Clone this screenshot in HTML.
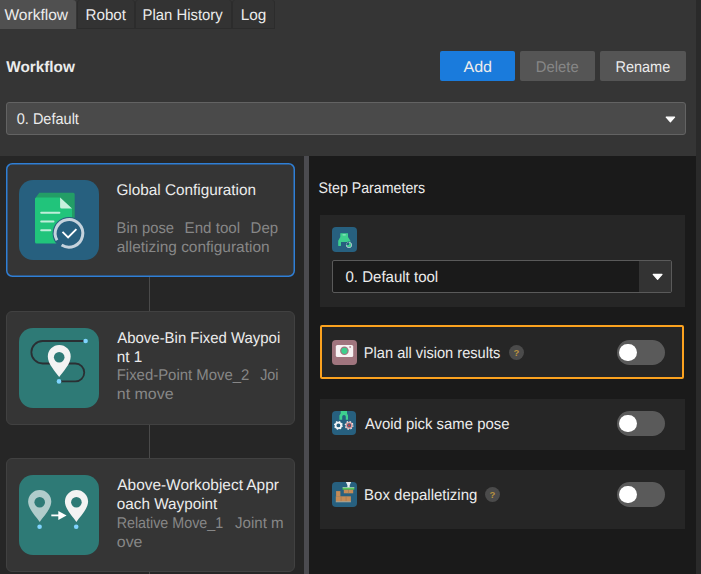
<!DOCTYPE html>
<html>
<head>
<meta charset="utf-8">
<title>Workflow</title>
<style>
html,body{margin:0;padding:0;}
body{width:701px;height:574px;overflow:hidden;background:#353535;position:relative;
 font-family:"Liberation Sans","DejaVu Sans",sans-serif;color:#ececec;font-size:15.5px;}
.abs{position:absolute;}
.t{position:absolute;white-space:pre;line-height:20px;height:20px;font-size:15.5px;transform-origin:0 0;text-rendering:geometricPrecision;}
.t.b{font-weight:bold;}
.t.g{color:#878787;}
/* tabs */
.tab{position:absolute;top:0;height:29px;box-sizing:border-box;background:#333333;
 border:1px solid #2c2c2c;border-top:none;border-radius:3px 3px 0 0;}
.tab.sel{background:#505050;border:none;border-radius:0 3px 0 0;}
/* buttons */
.btn{position:absolute;top:51px;height:30px;border-radius:2px;}
/* panels */
.box{position:absolute;left:320px;width:365px;background:#262626;}
.card{position:absolute;left:6px;width:289px;height:114px;box-sizing:border-box;background:#353535;
 border:1px solid #414141;border-radius:6px;}
.tile{position:absolute;left:19px;width:80px;height:80px;border-radius:14px;background:#2e7a76;}
.ico{position:absolute;left:332px;width:25px;height:25px;border-radius:4px;background:#27607f;overflow:hidden;}
.tog{position:absolute;left:617px;width:48px;height:25px;border-radius:13px;background:#5a5a5a;}
.tog i{position:absolute;left:2.3px;top:3.8px;width:17.5px;height:17.5px;border-radius:50%;background:#fff;}
.help{position:absolute;width:15px;height:15px;border-radius:50%;background:#4b4b4b;color:#b8923f;
 font-size:9.5px;font-weight:bold;line-height:15px;text-align:center;}
.g{color:#8a8a8a;}
</style>
</head>
<body>
<!-- right strip -->
<div class="abs" style="left:696px;top:0;width:5px;height:574px;background:#2a2a2a;"></div>

<!-- tabs -->
<div class="tab sel" style="left:0;width:76px;"></div>
<div class="tab" style="left:77px;width:58px;"></div>
<div class="tab" style="left:135px;width:97px;"></div>
<div class="tab" style="left:232px;width:43px;"></div>
<!--TEXTS:tabs-->
<span class="t" id="tb1" style="left:4px;top:6px;transform:translateX(0.50px) scaleX(1.0016);">Workflow</span>
<span class="t" id="tb2" style="left:85px;top:6px;transform:translateX(0.48px) scaleX(0.9800);">Robot</span>
<span class="t" id="tb3" style="left:142px;top:6px;transform:translateX(0.60px) scaleX(0.9581);">Plan History</span>
<span class="t" id="tb4" style="left:240px;top:6px;transform:translateX(0.66px) scaleX(0.9895);">Log</span>
<!--/TEXTS:tabs-->

<!-- header -->
<div class="btn" style="left:440px;width:75px;background:#1a7bdc;"></div>
<div class="btn" style="left:520px;width:75px;background:#555555;"></div>
<div class="btn" style="left:600px;width:86px;background:#555555;"></div>
<!--TEXTS:header-->
<span class="t b" id="hd" style="left:6px;top:58px;transform:translateX(0.30px) scaleX(0.9871);">Workflow</span>
<span class="t" id="b1" style="left:463px;top:58px;transform:translateX(0.40px) scaleX(1.0377);">Add</span>
<span class="t g" id="b2" style="left:535px;top:58px;transform:translateX(0.81px) scaleX(0.9558);">Delete</span>
<span class="t" id="b3" style="left:615px;top:58px;transform:translateX(0.43px) scaleX(0.9357);">Rename</span>
<!--/TEXTS:header-->

<!-- dropdown -->
<div class="abs" style="left:6px;top:102px;width:680px;height:33px;box-sizing:border-box;background:#4a4a4a;border:1px solid #636363;border-radius:3px;"></div>
<svg class="abs" style="left:664px;top:115px;" width="14" height="10" viewBox="0 0 14 10"><path d="M2.2 2.2 L10.6 2.2 L6.4 6.8 Z" fill="#fff" stroke="#fff" stroke-width="1.2" stroke-linejoin="round"/></svg>
<!--TEXTS:dropdown-->
<span class="t" id="dd" style="left:16px;top:110px;transform:translateX(0.73px) scaleX(0.9369);">0. Default</span>
<!--/TEXTS:dropdown-->

<!-- lower area -->
<div class="abs" style="left:0;top:156px;width:304px;height:418px;background:#262626;"></div>
<div class="abs" style="left:304px;top:156px;width:5px;height:418px;background:#4b4b50;"></div>
<div class="abs" style="left:309px;top:156px;width:387px;height:418px;background:#1a1a1a;"></div>

<!-- connectors -->
<div class="abs" style="left:149px;top:277px;width:1px;height:297px;background:#4a4a4a;"></div>

<!-- card 1 -->
<svg class="abs" style="left:6px;top:163px;" width="289" height="114" viewBox="0 0 289 114"><rect x="0.75" y="0.75" width="287.5" height="112.5" rx="5.5" fill="#353535" stroke="#2f7fd6" stroke-width="1.5"/></svg>
<div class="tile" style="top:180px;background:#27607f;"></div>
<svg class="abs" style="left:19px;top:180px;" width="80" height="80" viewBox="0 0 80 80">
<path d="M20.3 12.8 H54.2 a1.5 1.5 0 0 1 1.5 1.5 V43 H16 V18.4 Z" fill="#239d66"/>
<path d="M17.5 17.4 H41.1 L53 28.6 V62 a1.5 1.5 0 0 1 -1.5 1.5 H17.5 a1.5 1.5 0 0 1 -1.5 -1.5 V18.9 a1.5 1.5 0 0 1 1.5 -1.5 Z" fill="#21c47b"/>
<path d="M41.1 17.4 L53 28.6 H42.6 a1.5 1.5 0 0 1 -1.5 -1.5 Z" fill="#c8f0dd"/>
<rect x="21.2" y="31.8" width="20.2" height="2" rx="1" fill="#bfeeda"/>
<rect x="21.2" y="40.4" width="14.3" height="2" rx="1" fill="#bfeeda"/>
<rect x="21.2" y="49.2" width="11.1" height="2" rx="1" fill="#bfeeda"/>
<circle cx="50" cy="53.3" r="16.4" fill="#27607f"/>
<path d="M38.0 60.2 A13.8 13.8 0 1 1 42.6 65" fill="none" stroke="#c5d3dd" stroke-width="3"/>
<path d="M43.5 51.8 L49.1 57.4 L57.4 49.1" fill="none" stroke="#ffffff" stroke-width="1.9"/>
</svg>

<!--TEXTS:card1-->
<span class="t" id="c1a" style="left:116px;top:181px;transform:translateX(0.46px) scaleX(0.9878);">Global Configuration</span>
<span class="t g" id="c1b1" style="left:116px;top:219px;transform:translateX(0.61px) scaleX(0.9504);">Bin pose</span>
<span class="t g" id="c1b2" style="left:184px;top:219px;transform:translateX(0.58px) scaleX(0.9753);">End tool</span>
<span class="t g" id="c1b3" style="left:250px;top:219px;transform:translateX(0.59px) scaleX(0.9660);">Dep</span>
<span class="t g" id="c1c" style="left:116px;top:238px;transform:translateX(0.75px) scaleX(0.9964);">alletizing configuration</span>
<!--/TEXTS:card1-->

<!-- card 2 -->
<div class="card" style="top:311px;"></div>
<div class="tile" style="top:328px;"></div>
<svg class="abs" style="left:19px;top:328px;" width="80" height="80" viewBox="0 0 80 80">
<path d="M66.6 13 H23.6 A11.25 11.25 0 0 0 23.6 35.5 H56.3 A8.95 8.95 0 0 1 56.3 53.4 H40" fill="none" stroke="#2a2f33" stroke-width="1.8"/>
<circle cx="66.6" cy="13" r="2.3" fill="#7fd4ff"/>
<circle cx="40" cy="53.4" r="2.3" fill="#7fd4ff"/>
<path d="M40.2 49 C36.5 43.5 28.8 36 28.8 28.4 A11.45 11.45 0 0 1 51.7 28.4 C51.7 36 43.9 43.5 40.2 49 Z" fill="#f3f3f3"/>
<circle cx="40.2" cy="29.3" r="5.3" fill="#2e7a76"/>
</svg>

<!--TEXTS:card2-->
<span class="t" id="c2a" style="left:117px;top:329px;transform:translateX(0.30px) scaleX(0.9634);">Above-Bin Fixed Waypoi</span>
<span class="t" id="c2b" style="left:116px;top:348px;transform:translateX(0.81px) scaleX(0.9856);">nt 1</span>
<span class="t g" id="c2c1" style="left:116px;top:366px;transform:translateX(0.70px) scaleX(0.9625);">Fixed-Point Move_2</span>
<span class="t g" id="c2c2" style="left:260px;top:366px;transform:translateX(0.17px) scaleX(0.9243);">Joi</span>
<span class="t g" id="c2d" style="left:116px;top:385px;transform:translateX(0.77px) scaleX(1.0299);">nt move</span>
<!--/TEXTS:card2-->

<!-- card 3 -->
<div class="card" style="top:458px;"></div>
<div class="tile" style="top:475px;"></div>
<svg class="abs" style="left:19px;top:475px;" width="80" height="80" viewBox="0 0 80 80">
<path d="M20.7 46.9 C17 41.5 9.1 34 9.1 26.6 A11.6 11.6 0 0 1 32.3 26.6 C32.3 34 24.4 41.5 20.7 46.9 Z" fill="#b0cccb"/>
<circle cx="20.7" cy="27.2" r="5.3" fill="#2e7a76"/>
<path d="M57.4 46.9 C53.7 41.5 45.9 34 45.9 26.6 A11.6 11.6 0 0 1 69.1 26.6 C69.1 34 61.1 41.5 57.4 46.9 Z" fill="#f3f3f3"/>
<circle cx="57.4" cy="27.2" r="5.3" fill="#2e7a76"/>
<circle cx="20.6" cy="51.8" r="2.3" fill="#7fd4ff"/>
<circle cx="57.2" cy="51.8" r="2.3" fill="#7fd4ff"/>
<rect x="32.3" y="39.5" width="8" height="1.8" fill="#fff"/>
<path d="M39.3 36 L47.6 40.4 L39.3 44.9 Z" fill="#fff"/>
</svg>

<!--TEXTS:card3-->
<span class="t" id="c3a" style="left:117px;top:476px;transform:translateX(0.30px) scaleX(0.9941);">Above-Workobject Appr</span>
<span class="t" id="c3b" style="left:116px;top:495px;transform:translateX(0.81px) scaleX(0.9857);">oach Waypoint</span>
<span class="t g" id="c3c1" style="left:116px;top:514px;transform:translateX(0.65px) scaleX(0.9225);">Relative Move_1</span>
<span class="t g" id="c3c2" style="left:234px;top:514px;transform:translateX(0.96px) scaleX(0.9744);">Joint m</span>
<span class="t g" id="c3d" style="left:116px;top:533px;transform:translateX(0.79px) scaleX(1.0274);">ove</span>
<!--/TEXTS:card3-->

<!-- right panel -->

<div class="box" style="top:215px;height:92px;"></div>
<svg class="abs" style="left:332px;top:227px;" width="25" height="25" viewBox="0 0 25 25">
<rect width="25" height="25" rx="4" fill="#27607f"/>
<path d="M8.3 6.2 H16 V10 L18.4 13.8 V19 H16.2 V15 H9 V18.4 a0.6 0.6 0 0 1 -0.6 0.6 H6.8 a0.6 0.6 0 0 1 -0.6 -0.6 V13.8 L8.3 10 Z" fill="#3ecf8e"/>
<rect x="10.4" y="7.2" width="3.5" height="1.2" rx="0.6" fill="#8ee6bd"/>
<circle cx="17" cy="18" r="3.6" fill="#27607f"/>
<circle cx="17" cy="18" r="2.7" fill="#3ecf8e" stroke="#a9bfcb" stroke-width="1"/>
<path d="M14.3 18 A2.7 2.7 0 0 1 17 15.3 V18 Z" fill="#27607f"/>
</svg>
<div class="abs" style="left:332px;top:260px;width:340px;height:33px;box-sizing:border-box;background:#1a1a1a;border:1px solid #5a5a5a;border-radius:2px;"></div>
<div class="abs" style="left:639px;top:261px;width:32px;height:31px;background:#333333;"></div>
<svg class="abs" style="left:651px;top:272px;" width="14" height="10" viewBox="0 0 14 10"><path d="M2.2 2.4 L11.0 2.4 L6.6 7.3 Z" fill="#fff" stroke="#fff" stroke-width="1.2" stroke-linejoin="round"/></svg>

<div class="box" style="top:325px;width:364px;height:54px;box-sizing:border-box;border:2px solid #fba21f;border-radius:2px;"></div>
<svg class="abs" style="left:332px;top:340px;" width="25" height="25" viewBox="0 0 25 25">
<rect width="25" height="25" rx="4" fill="#a0757e"/>
<rect x="3.8" y="4.9" width="17.4" height="12.1" rx="1.6" fill="#f7f3f4"/>
<circle cx="12.4" cy="10.8" r="4.3" fill="#a0757e"/>
<circle cx="12.4" cy="10.8" r="3.1" fill="#3ecf8e"/>
<circle cx="18.1" cy="7.1" r="1" fill="#b8959c"/>
</svg>
<div class="help" style="left:509px;top:345px;">?</div>
<div class="tog" style="top:340px;"><i></i></div>

<div class="box" style="top:399px;height:51px;"></div>
<svg class="abs" style="left:332px;top:411px;" width="24" height="24" viewBox="0 0 24 24">
<rect width="24" height="24" rx="4" fill="#27607f"/>
<path d="M8.7 0 H15 V2.5 L16 4.5 V8.8 H13.8 V5.8 A1.8 1.8 0 0 0 10.2 5.8 V8.8 H7.4 V4.5 L8.7 2.5 Z" fill="#3ecf8e"/>
<g fill="none">
<circle cx="6.4" cy="14.4" r="2.8" stroke="#f4f6f8" stroke-width="1.7"/>
<circle cx="6.4" cy="14.4" r="3.8" stroke="#f4f6f8" stroke-width="1.3" stroke-dasharray="1.5 1.48"/>
<circle cx="17.1" cy="14.4" r="2.8" stroke="#e59a9a" stroke-width="1.5"/>
<circle cx="17.1" cy="14.4" r="3.8" stroke="#e4e6ec" stroke-width="1.3" stroke-dasharray="1.5 1.48"/>
</g>
<circle cx="17.1" cy="14.4" r="1.2" fill="#c43a4a"/>
</svg>
<div class="tog" style="top:411px;"><i></i></div>

<div class="box" style="top:470px;height:59px;"></div>
<svg class="abs" style="left:332px;top:482px;" width="25" height="25" viewBox="0 0 25 25">
<rect width="25" height="25" rx="4" fill="#27607f"/>
<path d="M13.9 0 H19.1 L17.7 3.2 V5.6 H15.4 V3.2 Z" fill="#e8eef2"/>
<rect x="10.6" y="5.6" width="11.7" height="2.1" fill="#4cc44c"/>
<rect x="10.6" y="5.4" width="11.7" height="0.7" fill="#cfeccf"/>
<rect x="11.8" y="7.7" width="9.4" height="3.6" fill="#c48b56"/>
<rect x="16.4" y="7.7" width="0.5" height="3.6" fill="#8a7258"/>
<rect x="4.1" y="9.1" width="4.3" height="5.4" fill="#c48b56"/>
<rect x="3.8" y="14.3" width="15.1" height="5.2" fill="#c48b56"/>
<rect x="8.8" y="14.3" width="0.5" height="5.2" fill="#8a7258"/>
<rect x="13.8" y="14.3" width="0.5" height="5.2" fill="#8a7258"/>
<rect x="4.1" y="14.1" width="4.3" height="0.5" fill="#a98a62"/>
<rect x="3.8" y="19.5" width="15.1" height="0.7" fill="#d9c4a8"/>
</svg>
<div class="help" style="left:485px;top:487px;">?</div>
<div class="tog" style="top:482px;"><i></i></div>

<!--TEXTS:params-->
<span class="t" id="sp" style="left:318px;top:179px;transform:translateX(0.61px) scaleX(0.9157);">Step Parameters</span>
<span class="t" id="dt" style="left:345px;top:268px;transform:translateX(0.52px) scaleX(0.9687);">0. Default tool</span>
<span class="t" id="p1" style="left:363px;top:344px;transform:translateX(0.82px) scaleX(0.9434);">Plan all vision results</span>
<span class="t" id="p2" style="left:364px;top:415px;transform:translateX(0.90px) scaleX(0.9603);">Avoid pick same pose</span>
<span class="t" id="p3" style="left:364px;top:486px;transform:translateX(0.09px) scaleX(0.9661);">Box depalletizing</span>
<!--/TEXTS:params-->
</body>
</html>
